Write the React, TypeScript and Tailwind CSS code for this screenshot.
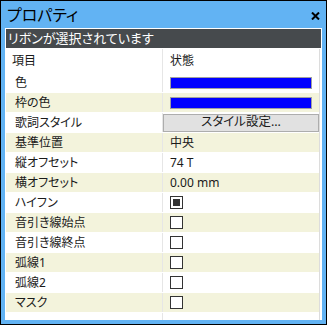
const FONT =
  "font-['Noto_Sans','Noto_Sans_CJK_JP',sans-serif] [font-feature-settings:'palt']";

type Row = {
  label: string;
  kind: "color" | "button" | "text" | "check";
  value?: string;
  checked?: boolean;
};

const ROWS: Row[] = [
  { label: "色", kind: "color" },
  { label: "枠の色", kind: "color" },
  { label: "歌詞スタイル", kind: "button", value: "スタイル設定..." },
  { label: "基準位置", kind: "text", value: "中央" },
  { label: "縦オフセット", kind: "text", value: "74 T" },
  { label: "横オフセット", kind: "text", value: "0.00 mm" },
  { label: "ハイフン", kind: "check", checked: true },
  { label: "音引き線始点", kind: "check" },
  { label: "音引き線終点", kind: "check" },
  { label: "弧線1", kind: "check" },
  { label: "弧線2", kind: "check" },
  { label: "マスク", kind: "check" },
];

const Checkbox = ({ checked }: { checked?: boolean }) => (
  <span className="flex h-[13px] w-[13px] items-center justify-center border border-[#333333] bg-white">
    {checked && <span className="h-[7px] w-[7px] bg-[#333333]" />}
  </span>
);

const ValueCell = ({ row }: { row: Row }) => {
  if (row.kind === "color") {
    return (
      <div className="px-[7px]">
        <div className="h-[12px] border border-[#a0a0a0] bg-[#0000ff]" />
      </div>
    );
  }

  if (row.kind === "button") {
    return (
      <div className="flex h-[18px] items-center justify-center border border-[#adadad] bg-[#e1e1e1] text-[12.5px] text-[#1a1a1a]">
        {row.value}
      </div>
    );
  }

  if (row.kind === "check") {
    return (
      <div className="px-[7px]">
        <Checkbox checked={row.checked} />
      </div>
    );
  }

  return <div className="px-[7px] text-[12px] text-[#1a1a1a]">{row.value}</div>;
};

export default function App() {
  return (
    <div
      className={`flex h-[325px] w-[327px] flex-col border border-black bg-[#62b3f3] ${FONT}`}
    >
      <div className="flex h-[27px] shrink-0 items-center justify-between pl-[6px] pr-[6px]">
        <span className="text-[16px] leading-none text-black">プロパティ</span>
        <svg width="9" height="8" viewBox="0 0 9 8" className="mt-[2px]">
          <path d="M1 0.5 L8 7.5 M8 0.5 L1 7.5" stroke="#000" strokeWidth="2" />
        </svg>
      </div>

      <div className="flex min-h-0 flex-1 flex-col px-[4px] pb-[4px]">
        <div className="flex h-[21px] shrink-0 items-center border border-white bg-[#464a4d] px-[2px] text-[13px] leading-none text-white">
          リボンが選択されています
        </div>

        <div className="flex min-h-0 flex-1 bg-white">
          <div className="flex flex-1 flex-col pl-[1px]">
            <div className="flex h-[24px] shrink-0 items-center text-[12px] text-[#1a1a1a]">
              <div className="flex h-full w-[157px] items-center border-r border-[#e6e6e6] pl-[6px]">
                項目
              </div>
              <div className="pl-[7px]">状態</div>
            </div>

            {ROWS.map((row, i) => (
              <div
                key={row.label}
                className={`flex h-[20px] shrink-0 items-center border-b border-white ${
                  i % 2 === 1 ? "bg-[#f3f3dc]" : "bg-white"
                }`}
              >
                <div className="flex h-full w-[157px] items-center border-r border-[#e6e6e6] pl-[9px] text-[12px] text-[#1a1a1a]">
                  {row.label}
                </div>
                <div className="flex-1">
                  <ValueCell row={row} />
                </div>
              </div>
            ))}

            <div className="flex flex-1">
              <div className="w-[157px] border-r border-[#e6e6e6]" />
            </div>
          </div>
          <div className="w-[3px] border-l border-[#dcdcdc]" />
        </div>
      </div>
    </div>
  );
}
